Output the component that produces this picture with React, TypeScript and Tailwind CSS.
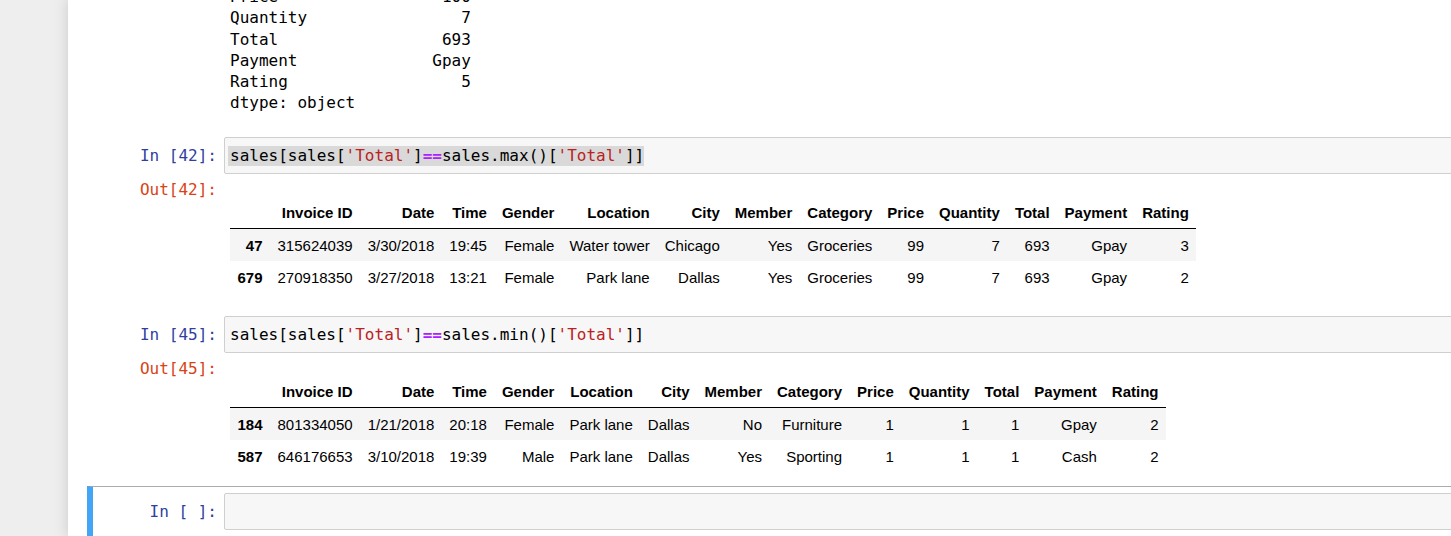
import React from "react";

const mono = "font-['DejaVu_Sans_Mono',monospace] text-[16px]";

type Row = string[];

const cols = [
  "Invoice ID",
  "Date",
  "Time",
  "Gender",
  "Location",
  "City",
  "Member",
  "Category",
  "Price",
  "Quantity",
  "Total",
  "Payment",
  "Rating",
];

const maxRows: Row[] = [
  ["47", "315624039", "3/30/2018", "19:45", "Female", "Water tower", "Chicago", "Yes", "Groceries", "99", "7", "693", "Gpay", "3"],
  ["679", "270918350", "3/27/2018", "13:21", "Female", "Park lane", "Dallas", "Yes", "Groceries", "99", "7", "693", "Gpay", "2"],
];

const minRows: Row[] = [
  ["184", "801334050", "1/21/2018", "20:18", "Female", "Park lane", "Dallas", "No", "Furniture", "1", "1", "1", "Gpay", "2"],
  ["587", "646176653", "3/10/2018", "19:39", "Male", "Park lane", "Dallas", "Yes", "Sporting", "1", "1", "1", "Cash", "2"],
];

const series: [string, string][] = [
  ["Price", "100"],
  ["Quantity", "7"],
  ["Total", "693"],
  ["Payment", "Gpay"],
  ["Rating", "5"],
];

function Prompt({ kind, n }: { kind: "In" | "Out"; n?: string }) {
  return (
    <div
      className={`${mono} w-[131px] shrink-0 pr-[7px] text-right leading-[21.25px] whitespace-pre ${
        kind === "In" ? "text-[#303f9f]" : "text-[#d84315]"
      }`}
    >
      {kind === "In" ? `In [${n ?? " "}]:` : `Out[${n}]:`}
    </div>
  );
}

function CodeLine({ fn, selected }: { fn: string; selected?: boolean }) {
  const code = (
    <>
      <span>sales[sales[</span>
      <span className="text-[#ba2121]">'Total'</span>
      <span>]</span>
      <span className="font-bold text-[#aa22ff]">==</span>
      <span>sales.{fn}()[</span>
      <span className="text-[#ba2121]">'Total'</span>
      <span>]]</span>
    </>
  );
  return selected ? (
    <span className="inline-block bg-[#d9d9d9] pl-[2px] leading-[20px]">{code}</span>
  ) : (
    <span className="pl-[2px]">{code}</span>
  );
}

function InputBox({ children }: { children?: React.ReactNode }) {
  return (
    <div
      className={`${mono} flex h-[37px] flex-1 items-center rounded-[2px] border border-[#cfcfcf] bg-[#f7f7f7] pl-[3px] text-black whitespace-pre`}
    >
      {children}
    </div>
  );
}

function Frame({ rows }: { rows: Row[] }) {
  return (
    <table className="border-collapse font-['Liberation_Sans',Arial,sans-serif] text-[15px] leading-[normal] text-black">
      <thead className="border-b border-black">
        <tr>
          <th className="px-[7.5px] py-[7.5px]" />
          {cols.map((c) => (
            <th key={c} className="px-[7.5px] py-[7.5px] text-right font-bold whitespace-nowrap">
              {c}
            </th>
          ))}
        </tr>
      </thead>
      <tbody>
        {rows.map((r, i) => (
          <tr key={r[0]} className={i % 2 === 0 ? "bg-[#f5f5f5]" : ""}>
            <th className="px-[7.5px] py-[7.5px] text-right font-bold">{r[0]}</th>
            {r.slice(1).map((v, j) => (
              <td key={j} className="px-[7.5px] py-[7.5px] text-right whitespace-nowrap">
                {v}
              </td>
            ))}
          </tr>
        ))}
      </tbody>
    </table>
  );
}

export default function App() {
  return (
    <div className="h-[536px] w-[1451px] overflow-hidden bg-[#eeeeee]">
      <div className="ml-[68px] flex h-full w-[1420px] flex-col bg-white pl-[19px] shadow-[0_0_12px_1px_rgba(87,87,87,0.2)]">
        {/* previous cell, scrolled out of view */}
        <div className="-mt-[14px] flex shrink-0 border-l-[6px] border-transparent">
          <div className="w-[131px] shrink-0" />
          <pre className={`${mono} pl-[6px] leading-[21.25px] text-black`}>
            {series.map(([k, v]) => k.padEnd(25 - v.length) + v).join("\n") + "\ndtype: object"}
          </pre>
        </div>

        {/* In [42] */}
        <div className="mt-[23.5px] shrink-0 border-l-[6px] border-transparent">
          <div className="flex items-center">
            <Prompt kind="In" n="42" />
            <InputBox>
              <CodeLine fn="max" selected />
            </InputBox>
          </div>
          <div className="mt-[5px] flex">
            <Prompt kind="Out" n="42" />
            <div className="pt-[17px] pl-[6px]">
              <Frame rows={maxRows} />
            </div>
          </div>
        </div>

        {/* In [45] */}
        <div className="mt-[23px] shrink-0 border-l-[6px] border-transparent">
          <div className="flex items-center">
            <Prompt kind="In" n="45" />
            <InputBox>
              <CodeLine fn="min" />
            </InputBox>
          </div>
          <div className="mt-[5px] flex">
            <Prompt kind="Out" n="45" />
            <div className="pt-[17px] pl-[6px]">
              <Frame rows={minRows} />
            </div>
          </div>
        </div>

        {/* selected empty cell */}
        <div className="mt-[14px] h-[60px] shrink-0 border-t border-l-[6px] border-t-[#ababab] border-l-[#42a5f5] pt-[6px]">
          <div className="flex items-center">
            <Prompt kind="In" />
            <InputBox />
          </div>
        </div>
      </div>
    </div>
  );
}
